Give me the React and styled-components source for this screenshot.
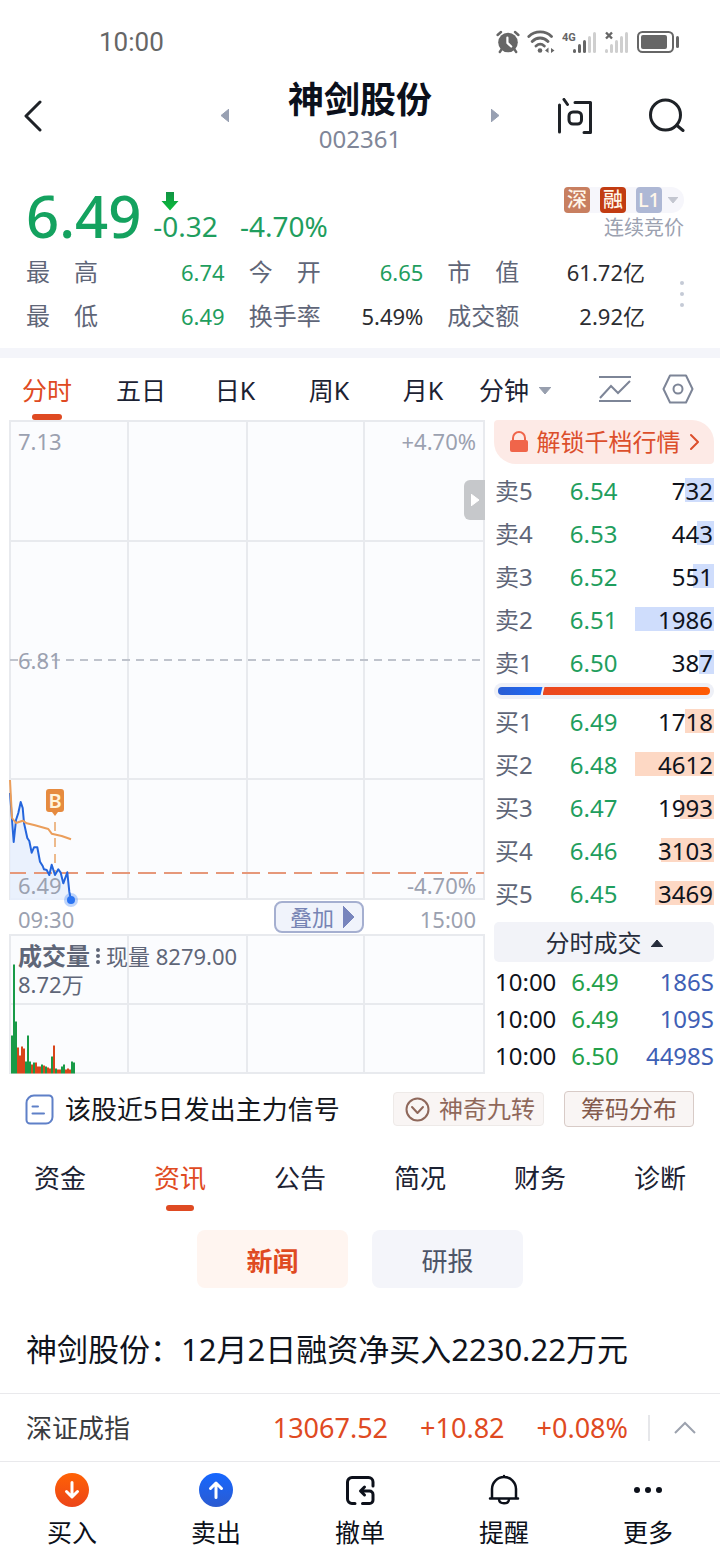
import React, {useState} from 'react';
import styled, {createGlobalStyle} from 'styled-components';

const GREEN = '#1f9e5e';
const RED = '#df4a22';
const INK = '#1c2233';
const GREY = '#5f6678';
const PALE = '#9ba1b0';

const GlobalStyle = createGlobalStyle`
    * {
        box-sizing: border-box;
    }

    body {
        margin: 0;
        background: #fff;
        color: #0f131c;
        font-family: "Noto Sans", "Noto Sans CJK SC", sans-serif;
        font-size: 24px;
        line-height: 32px;
    }

    svg {
        display: block;
        flex-shrink: 0;
    }
`;

const Page = styled.div`
    display: flex;
    flex-direction: column;
    min-height: 100vh;
    overflow-x: hidden;
`;

const PlainButton = styled.button`
    display: flex;
    align-items: center;
    justify-content: center;
    padding: 0;
    border: none;
    background: none;
    color: inherit;
    font: inherit;
    white-space: nowrap;
    cursor: pointer;
`;

/* ---------- status bar and header ---------- */

const StatusBar = styled.div`
    display: flex;
    align-items: center;
    justify-content: space-between;
    height: 74px;
    padding: 10px 41px 0 99px;
    color: #666;
    font-family: Roboto, sans-serif;
    font-size: 26px;
`;

const StatusIcons = styled.div`
    display: flex;
    align-items: center;
    gap: 7px;
`;

const Header = styled.header`
    display: grid;
    grid-template-columns: 1fr 278px 1fr;
    align-items: center;
    height: 83px;
    padding: 0 24px;
    color: #1e2227;
`;

const StockSwitcher = styled.div`
    display: flex;
    align-items: center;
    justify-content: space-between;
    text-align: center;
`;

const StockTitle = styled.div`
    padding-top: 2px;
`;

const StockName = styled.h1`
    margin: 0;
    color: #0b101b;
    font-size: 36px;
    line-height: 44px;
    font-weight: 700;
`;

const StockCode = styled.div`
    color: #7f8698;
    font-size: 24px;
    line-height: 34px;
`;

const HeaderActions = styled.div`
    display: flex;
    justify-content: flex-end;
    gap: 56px;
    padding-right: 11px;
`;

/* ---------- quote ---------- */

const Quote = styled.section`
    padding: 25px 36px 10px 26px;
    border-bottom: 10px solid #f4f5fa;
`;

const QuoteTop = styled.div`
    display: flex;
    height: 68px;
    color: ${GREEN};
`;

const Price = styled.div`
    color: #14a25f;
    font-size: 58px;
    line-height: 68px;
    font-weight: 500;
`;

const Change = styled.div`
    display: flex;
    flex-direction: column;
    margin-left: 12px;
    padding-top: 9px;
    font-size: 28px;
    line-height: 30px;

    svg {
        margin-left: 8px;
    }
`;

const ChangeRow = styled.div`
    display: flex;
    gap: 22px;
`;

const Tags = styled.div`
    margin: 5px 0 0 auto;
    color: ${PALE};
    font-size: 20px;
    line-height: 30px;
    text-align: right;
`;

const TagRow = styled.div`
    display: flex;
    align-items: center;
    gap: 10px;
    border-radius: 4px 13px 13px 4px;
    background: #f6f6fb;
`;

const Tag = styled.span`
    width: 26px;
    height: 26px;
    border-radius: 4px;
    background: ${(props) => props.$color};
    color: #fff6ea;
    font-size: 20px;
    line-height: 26px;
    font-weight: 500;
    text-align: center;
`;

const LevelButton = styled(PlainButton)`
    gap: 6px;
    padding-right: 6px;
`;

const StatsRow = styled.div`
    display: flex;
    align-items: center;
    justify-content: space-between;
`;

const Stats = styled.dl`
    display: grid;
    flex: 1;
    grid-template-columns: 199fr 175fr 198fr;
    column-gap: 24px;
    margin: 0 35px 0 0;
    line-height: 44px;
`;

const Stat = styled.div`
    display: flex;
    justify-content: space-between;

    dt {
        color: ${GREY};
    }

    dd {
        margin: 0;
        color: ${(props) => (props.$down ? GREEN : '#2c2d31')};
        font-size: 22px;
    }
`;

/* ---------- period tabs ---------- */

const PeriodTabs = styled.nav`
    display: grid;
    grid-template-columns: repeat(5, 94fr) 90fr 160fr;
    height: 62px;
    color: ${INK};
    font-size: 25px;
`;

const PeriodTab = styled(PlainButton)`
    position: relative;
    gap: 10px;
    padding-top: 2px;
    color: ${(props) => (props.$active ? RED : INK)};

    &::after {
        content: '';
        position: absolute;
        bottom: 0;
        width: 30px;
        height: 6px;
        border-radius: 3px;
        background: ${(props) => (props.$active ? RED : 'transparent')};
    }
`;

const ChartTools = styled.div`
    display: flex;
    align-items: center;
    justify-content: flex-end;
    gap: 30px;
    padding-right: 26px;
`;

/* ---------- chart column ---------- */

const Market = styled.main`
    display: flex;
    gap: 9px;
    padding: 0 6px 0 9px;
`;

const ChartColumn = styled.div`
    flex: 476;
    min-width: 0;
    color: ${PALE};
    font-size: 22px;
`;

const Plot = styled.div`
    position: relative;
`;

const ChartSvg = styled.svg`
    width: 100%;
    height: auto;
    overflow: visible;
`;

const PlotLabel = styled.span`
    position: absolute;
    line-height: 28px;
    ${(props) => (props.$right ? 'right: 9px;' : 'left: 9px;')}
    ${(props) => props.$at === 'top' && 'top: 7px;'}
    ${(props) => props.$at === 'middle' && 'top: calc(50% - 14px);'}
    ${(props) => props.$at === 'bottom' && 'bottom: 1px;'}
`;

const DrawerHandle = styled(PlainButton)`
    position: absolute;
    top: 60px;
    right: 0;
    width: 21px;
    height: 40px;
    border-radius: 6px 0 0 6px;
    background: #c6c8cb;
`;

const TimeAxis = styled.div`
    display: grid;
    grid-template-columns: 256fr 90px 112fr;
    align-items: center;
    height: 34px;
    padding: 0 9px;
    line-height: 28px;

    span {
        padding-top: 4px;
    }

    span:last-child {
        text-align: right;
    }
`;

const OverlayButton = styled(PlainButton)`
    gap: 9px;
    height: 32px;
    padding-left: 6px;
    border: 2px solid #a5afd0;
    border-radius: 8px;
    background: #f0f3fb;
    color: #7784b4;
`;

const VolumeInfo = styled.div`
    position: absolute;
    top: 8px;
    left: 9px;
    color: ${GREY};
    line-height: 28px;
`;

const VolumeTitle = styled.div`
    display: flex;
    align-items: center;
    gap: 6px;

    strong {
        font-size: 24px;
    }
`;

/* ---------- order book ---------- */

const BookColumn = styled.aside`
    flex: 220;
    min-width: 0;
`;

const UnlockButton = styled(PlainButton)`
    gap: 9px;
    width: 100%;
    height: 44px;
    margin-bottom: 4px;
    border-radius: 4px 22px 4px 22px;
    background: #fdeae6;
    color: #dc4f2c;
`;

const BookTable = styled.table`
    width: 100%;
    border-collapse: collapse;
    table-layout: fixed;

    td, th {
        height: 43px;
        padding: 2px 0 0 1px;
        font-weight: 400;
        text-align: left;
    }

    th {
        width: 34%;
        color: ${GREY};
    }

    td:nth-child(2) {
        color: ${GREEN};
    }
`;

const Quantity = styled.td`
    && {
        width: 80px;
        padding-right: 1px;
        background: linear-gradient(${(props) => props.$color}, ${(props) => props.$color}) right center / ${(props) => props.$bar}px 24px no-repeat;
        text-align: right;
    }
`;

const RatioBar = styled.div`
    display: flex;
    height: 16px;
    padding: 4px;
    border-radius: 8px;
    background: #eef0f7;
`;

const RatioSell = styled.div`
    flex: 21;
    border-radius: 4px 0 0 4px;
    background: linear-gradient(90deg, #2b5dd2, #1b6bfa);
    clip-path: polygon(0 0, 100% 0, calc(100% - 2px) 100%, 0 100%);
`;

const RatioBuy = styled.div`
    flex: 79;
    border-radius: 0 4px 4px 0;
    background: linear-gradient(90deg, #ea4720, #ff5b05);
    clip-path: polygon(2px 0, 100% 0, 100% 100%, 0 100%);
`;

const DealsToggle = styled(PlainButton)`
    gap: 9px;
    width: 100%;
    height: 40px;
    margin: 8px 0 1px;
    padding-top: 2px;
    border-radius: 5px;
    background: #f2f3f8;
    color: #272d3c;
`;

const DealTable = styled.table`
    width: 100%;
    border-collapse: collapse;

    td {
        height: 37px;
        padding: 0 0 0 1px;
    }

    td:nth-child(2) {
        color: #23a04a;
    }

    td:nth-child(3) {
        color: #3f60b5;
        text-align: right;
    }
`;

/* ---------- lower sections ---------- */

const SignalRow = styled.div`
    display: flex;
    align-items: center;
    height: 70px;
    padding: 0 26px 0 25px;
`;

const SignalLink = styled.a`
    display: flex;
    align-items: center;
    gap: 11px;
    color: #14161c;
    font-size: 26px;
    text-decoration: none;
    white-space: nowrap;
`;

const ToolButton = styled(PlainButton)`
    gap: 9px;
    height: ${(props) => (props.$outlined ? 36 : 34)}px;
    margin-left: ${(props) => (props.$outlined ? '20px' : 'auto')};
    padding: 0 ${(props) => (props.$outlined ? 16 : 8)}px 0 ${(props) => (props.$outlined ? 16 : 11)}px;
    border: 1px solid ${(props) => (props.$outlined ? '#d8cbc7' : '#eeeae8')};
    border-radius: 4px;
    background: #f9f5f4;
    color: ${(props) => (props.$outlined ? '#835a4c' : '#8f685b')};
`;

const InfoTabs = styled.nav`
    display: grid;
    grid-template-columns: repeat(6, 1fr);
    height: 68px;
    font-size: 26px;
`;

const InfoTab = styled(PlainButton)`
    position: relative;
    color: ${(props) => (props.$active ? RED : INK)};

    &::after {
        content: '';
        position: absolute;
        bottom: 1px;
        width: 28px;
        height: 6px;
        border-radius: 3px;
        background: ${(props) => (props.$active ? RED : 'transparent')};
    }
`;

const FeedSwitch = styled.div`
    display: flex;
    justify-content: center;
    gap: 24px;
    padding: 18px 0;
`;

const FeedButton = styled(PlainButton)`
    width: 151px;
    height: 58px;
    padding-top: 4px;
    border-radius: 8px;
    background: ${(props) => (props.$active ? '#fff5f0' : '#f4f5fa')};
    color: ${(props) => (props.$active ? RED : '#4d5467')};
    font-size: 26px;
    font-weight: ${(props) => (props.$active ? 700 : 400)};
`;

const NewsItem = styled.a`
    flex: 1;
    padding: 23px 26px 20px;
    color: #0f131c;
    font-size: 31px;
    line-height: 40px;
    text-decoration: none;
`;

const IndexBar = styled.div`
    display: flex;
    align-items: center;
    gap: 20px;
    height: 69px;
    padding: 0 24px 0 26px;
    border: solid #e9e9ec;
    border-width: 1px 0;
    color: ${RED};
    font-size: 27px;
`;

const IndexName = styled.span`
    color: #3a3b3e;
    font-size: 26px;
`;

const IndexFigures = styled.div`
    display: flex;
    gap: 32px;
    margin-left: auto;
`;

const ExpandButton = styled(PlainButton)`
    height: 26px;
    padding-left: 24px;
    border-left: 2px solid #e6e7ea;
`;

const BottomNav = styled.nav`
    display: grid;
    grid-template-columns: repeat(5, 1fr);
    padding: 11px 0 12px;
    color: #0c101a;
    font-size: 25px;
`;

const NavButton = styled(PlainButton)`
    flex-direction: column;
    gap: 9px;
`;

/* ---------- icons ---------- */

const Triangle = ({dir, w, h, color}) => {
    const points = {
        left: `${w},0 ${w},${h} 0,${h / 2}`,
        right: `0,0 ${w},${h / 2} 0,${h}`,
        down: `0,0 ${w},0 ${w / 2},${h}`,
        up: `0,${h} ${w},${h} ${w / 2},0`,
    };
    return (
        <svg width={w} height={h} viewBox={`0 0 ${w} ${h}`}>
            <polygon points={points[dir]} fill={color} stroke={color} strokeLinejoin="round"/>
        </svg>
    );
};

const Stroke = ({w, h, width = 2, children}) => (
    <svg width={w} height={h} viewBox={`0 0 ${w} ${h}`} fill="none" stroke="currentColor"
         strokeWidth={width} strokeLinecap="round" strokeLinejoin="round">
        {children}
    </svg>
);

const AlarmIcon = () => (
    <svg width="24" height="24" viewBox="0 0 24 24" fill="none" stroke="#666" strokeWidth="2.4" strokeLinecap="round">
        <circle cx="12" cy="12.5" r="9.8" fill="#666" stroke="none"/>
        <path d="M1.6 5 5 2M22.4 5 19 2M5.5 19.5 3.8 22M18.5 19.5l1.7 2.5"/>
        <path d="M11.4 7.5v5.4l3.8 3.6" stroke="#fff" strokeWidth="2.2" strokeLinejoin="round"/>
    </svg>
);

const WifiIcon = () => (
    <svg width="28" height="24" viewBox="0 0 28 24" fill="none" stroke="#666" strokeWidth="2.8" strokeLinecap="round">
        <path d="M1.8 6.5C8 .4 18.4.4 24.5 6.5M5.2 11.5c4.4-4.7 11.4-4.7 15.8 0M9 16c2.6-2.3 5.8-2.3 8.3 0"/>
        <circle cx="13" cy="20.5" r="2.3" fill="#666" stroke="none"/>
        <path d="M18 20.5 21.5 17.5v5.5zM27.5 20.5 24 18v5z" fill="#666" stroke="none"/>
    </svg>
);

const BARS = [4, 9, 13, 17, 21];

const SignalBars = ({strength, x}) => BARS.map((h, i) => (
    <rect key={h} x={x + i * 5} y={23 - h} width="3" height={h} rx="1.5"
          fill={i < strength ? '#666' : '#cfcfcf'}/>
));

const MobileSignalIcon = () => (
    <svg width="36" height="24" viewBox="0 0 36 24">
        <SignalBars strength={3} x={11}/>
        <text x="0" y="11" fill="#666" fontSize="11" fontWeight="700">4G</text>
    </svg>
);

const NoSignalIcon = () => (
    <svg width="25" height="24" viewBox="0 0 25 24">
        <SignalBars strength={0} x={0}/>
        <path d="m1 2.500 6 6m0-6-6 6" stroke="#666" strokeWidth="2.4"/>
    </svg>
);

const BatteryIcon = () => (
    <svg width="42" height="24" viewBox="0 0 42 24">
        <rect x="1" y="2" width="35" height="20" rx="4.5" fill="none" stroke="#666" strokeWidth="2"/>
        <rect x="4" y="5" width="26" height="14" rx="2" fill="#666"/>
        <rect x="39" y="6" width="3" height="12" rx="1.5" fill="#666"/>
    </svg>
);

const AskIcon = () => (
    <Stroke w={36} h={36} width={3}>
        <path d="M2.5 7v27M7 1.500l3.500 5M18 4.500h15.500v30H27"/>
        <rect x="12" y="14" width="12.5" height="12" rx="4"/>
    </Stroke>
);

const SearchIcon = () => (
    <Stroke w={36} h={36} width={3}>
        <circle cx="16.5" cy="17" r="15"/>
        <path d="m28 27.500 6 5"/>
    </Stroke>
);

const DownArrow = () => (
    <svg width="18" height="20" viewBox="0 0 18 20">
        <defs>
            <linearGradient id="down" x1="0" y1="0" x2="0" y2="1">
                <stop offset="0" stopColor="#129344"/>
                <stop offset="1" stopColor="#08bd3a"/>
            </linearGradient>
        </defs>
        <path d="M5 1h8v9h4.500L9 19.500.500 10H5z" fill="url(#down)"/>
    </svg>
);

const MoreDots = ({color, r = 2, gap = 11}) => (
    <svg width={r * 2} height={gap * 2 + r * 2} viewBox={`0 0 ${r * 2} ${gap * 2 + r * 2}`} fill={color}>
        {[0, 1, 2].map((i) => <circle key={i} cx={r} cy={r + i * gap} r={r}/>)}
    </svg>
);

const TradeIcon = ({buy}) => (
    <svg width="34" height="34" viewBox="0 0 34 34">
        <defs>
            <linearGradient id={buy ? 'buy' : 'sell'} x1="0" y1="0" x2="0" y2="1">
                <stop offset="0" stopColor={buy ? '#ff6205' : '#1667ff'}/>
                <stop offset="1" stopColor={buy ? '#ec4519' : '#2b5bd0'}/>
            </linearGradient>
        </defs>
        <circle cx="17" cy="17" r="17" fill={`url(#${buy ? 'buy' : 'sell'})`}/>
        <path d={buy ? 'M17 9.500v14M11.500 18.500l5.500 5.500 5.500-5.500' : 'M17 24.500v-14M11.500 15.500l5.500-5.500 5.500 5.500'}
              fill="none" stroke="#fff" strokeWidth="3" strokeLinecap="round" strokeLinejoin="round"/>
    </svg>
);

const CancelIcon = () => (
    <Stroke w={34} h={34} width={3}>
        <path d="M12 30.500H9a4.500 4.500 0 0 1-4.500-4.500V9A4.500 4.500 0 0 1 9 4.500h16.500A4.500 4.500 0 0 1 30 9v4"/>
        <path d="M18.500 18h8a3.500 3.500 0 0 1 3.500 3.500v5.500a3.500 3.500 0 0 1-3.500 3.500h-7M21.500 14l-4 4 4 4"/>
    </Stroke>
);

const BellIcon = () => (
    <Stroke w={34} h={34} width={2.5}>
        <path d="M5 25.500V16a12 12 0 0 1 24 0v9.500M3 25.500h28M12 26.500c.500 5 9.500 5 10 0M17 3v1"/>
    </Stroke>
);

const EllipsisIcon = () => (
    <svg width="34" height="34" viewBox="0 0 34 34" fill="currentColor">
        <circle cx="6" cy="17" r="3"/>
        <circle cx="17" cy="17" r="3"/>
        <circle cx="28" cy="17" r="3"/>
    </svg>
);

/* ---------- charts ---------- */

const PRICE_LINE = '1,373 4.7,422 7,400 9.3,393 11.7,382 13.7,388 15,403 18.3,418 20.3,421 22.7,432.7 25,427.3 28.3,427.3 31,441.7 33.7,446 35,449.3 37.7,450 40.3,455 42.7,444.7 46,455 49.3,449.3 51.7,452.7 54.3,463.3 58.3,452.3 60.3,471.7 62,480';
const AVERAGE_LINE = '1,360 3,398 7,403 13.7,400.7 17.7,403.3 26,405.3 39.3,409 42.7,413.7 52.7,416 62,419.3';

const VOLUMES = [
    [38, 'g'], [109, 'g'], [52, 'g'], [26, 'r'], [18, 'r'], [27, 'r'], [25, 'r'], [12, 'g'],
    [38, 'g'], [12, 'g'], [9, 'r'], [11, 'g'], [11, 'r'], [7, 'r'], [7, 'r'], [9, 'g'],
    [8, 'r'], [7, 'g'], [6, 'r'], [5, 'r'], [17, 'g'], [28, 'r'], [5, 'g'], [4, 'r'],
    [4, 'r'], [7, 'g'], [9, 'g'], [4, 'r'], [5, 'r'], [4, 'r'], [12, 'g'], [11, 'g'],
];

const Grid = ({height, rows}) => (
    <g stroke="#e8eaee" strokeWidth="2">
        <rect x="1" y="1" width="474" height={height - 2} fill="#fbfcfe"/>
        {[119, 238, 355].map((x) => <line key={x} x1={x} x2={x} y1="1" y2={height - 1}/>)}
        {rows.map((y) => <line key={y} x1="1" x2="475" y1={y} y2={y}/>)}
    </g>
);

const PriceChart = () => (
    <ChartSvg viewBox="0 0 476 480">
        <Grid height={480} rows={[121, 359]}/>
        <line x1="1" x2="475" y1="240" y2="240" stroke="#bfc3cc" strokeWidth="2" strokeDasharray="8 6"/>
        <polygon points={`${PRICE_LINE} 1,480`} fill="#e6eefd" fillOpacity=".85"/>
        <line x1="1" x2="475" y1="453" y2="453" stroke="#e6987a" strokeWidth="2" strokeDasharray="18 8" strokeDashoffset="2"/>
        <line x1="46" x2="46" y1="402" y2="453" stroke="#e9a467" strokeWidth="1.5" strokeDasharray="9 7"/>
        <polyline points={PRICE_LINE} fill="none" stroke="#2465dc" strokeWidth="2" strokeLinejoin="round"/>
        <polyline points={AVERAGE_LINE} fill="none" stroke="#eb9e5b" strokeWidth="2" strokeLinejoin="round"/>
        <path d="M40 369h12a3 3 0 0 1 3 3v17a3 3 0 0 1-3 3h-3l-3 4-3-4h-3a3 3 0 0 1-3-3v-17a3 3 0 0 1 3-3z"
              fill="#e68b3f"/>
        <text x="46" y="388" fill="#fff4dc" fontSize="20" fontWeight="600" textAnchor="middle">B</text>
        <circle cx="62" cy="480" r="7" fill="#2b74f2" fillOpacity=".3"/>
        <circle cx="62" cy="480" r="4" fill="#2b74f2"/>
    </ChartSvg>
);

const VolumeChart = () => (
    <ChartSvg viewBox="0 0 476 140">
        <Grid height={140} rows={[70]}/>
        {VOLUMES.map(([h, side], i) => (
            <rect key={i} x={2 + i * 2} y={139.5 - h} width="2" height={h} fill={side === 'g' ? '#189a47' : '#d9451b'}/>
        ))}
    </ChartSvg>
);

/* ---------- data ---------- */

const STATS = [
    ['最　高', '6.74', true],
    ['今　开', '6.65', true],
    ['市　值', '61.72亿', false],
    ['最　低', '6.49', true],
    ['换手率', '5.49%', false],
    ['成交额', '2.92亿', false],
];

const SELLS = [
    ['卖5', '6.54', 732, 29],
    ['卖4', '6.53', 443, 17],
    ['卖3', '6.52', 551, 21],
    ['卖2', '6.51', 1986, 79],
    ['卖1', '6.50', 387, 15],
];

const BUYS = [
    ['买1', '6.49', 1718, 29],
    ['买2', '6.48', 4612, 79],
    ['买3', '6.47', 1993, 34],
    ['买4', '6.46', 3103, 53],
    ['买5', '6.45', 3469, 59],
];

const DEALS = [
    ['10:00', '6.49', '186S'],
    ['10:00', '6.49', '109S'],
    ['10:00', '6.50', '4498S'],
];

const PERIODS = ['分时', '五日', '日K', '周K', '月K', '分钟'];
const INFO = ['资金', '资讯', '公告', '简况', '财务', '诊断'];

const Book = ({rows, color}) => (
    <BookTable>
        <tbody>
            {rows.map(([label, price, quantity, bar]) => (
                <tr key={label}>
                    <th scope="row">{label}</th>
                    <td>{price}</td>
                    <Quantity $bar={bar} $color={color}>{quantity}</Quantity>
                </tr>
            ))}
        </tbody>
    </BookTable>
);

const App = () => {
    const [period, setPeriod] = useState('分时');
    const [info, setInfo] = useState('资讯');
    const [feed, setFeed] = useState('新闻');

    return (
        <Page>
            <GlobalStyle/>
            <StatusBar>
                <span>10:00</span>
                <StatusIcons>
                    <AlarmIcon/>
                    <WifiIcon/>
                    <MobileSignalIcon/>
                    <NoSignalIcon/>
                    <BatteryIcon/>
                </StatusIcons>
            </StatusBar>

            <Header>
                <div>
                    <PlainButton aria-label="返回">
                        <Stroke w={18} h={32} width={3}>
                            <path d="M16 2 2 16l14 14"/>
                        </Stroke>
                    </PlainButton>
                </div>
                <StockSwitcher>
                    <PlainButton aria-label="上一只">
                        <Triangle dir="left" w={8} h={13} color="#98a0b2"/>
                    </PlainButton>
                    <StockTitle>
                        <StockName>神剑股份</StockName>
                        <StockCode>002361</StockCode>
                    </StockTitle>
                    <PlainButton aria-label="下一只">
                        <Triangle dir="right" w={8} h={13} color="#98a0b2"/>
                    </PlainButton>
                </StockSwitcher>
                <HeaderActions>
                    <PlainButton aria-label="问"><AskIcon/></PlainButton>
                    <PlainButton aria-label="搜索"><SearchIcon/></PlainButton>
                </HeaderActions>
            </Header>

            <Quote>
                <QuoteTop>
                    <Price>6.49</Price>
                    <Change>
                        <DownArrow/>
                        <ChangeRow>
                            <span>-0.32</span>
                            <span>-4.70%</span>
                        </ChangeRow>
                    </Change>
                    <Tags>
                        <TagRow>
                            <Tag $color="#c87f60">深</Tag>
                            <Tag $color="#c23c12">融</Tag>
                            <LevelButton>
                                <Tag $color="#aeb8d5">L1</Tag>
                                <Triangle dir="down" w={10} h={6} color="#c3c6d0"/>
                            </LevelButton>
                        </TagRow>
                        连续竞价
                    </Tags>
                </QuoteTop>
                <StatsRow>
                    <Stats>
                        {STATS.map(([label, value, down]) => (
                            <Stat key={label} $down={down}>
                                <dt>{label}</dt>
                                <dd>{value}</dd>
                            </Stat>
                        ))}
                    </Stats>
                    <PlainButton aria-label="更多行情">
                        <MoreDots color="#c5cad6"/>
                    </PlainButton>
                </StatsRow>
            </Quote>

            <PeriodTabs>
                {PERIODS.map((name) => (
                    <PeriodTab key={name} $active={name === period} onClick={() => setPeriod(name)}>
                        {name}
                        {name === '分钟' && <Triangle dir="down" w={12} h={7} color="#989fae"/>}
                    </PeriodTab>
                ))}
                <ChartTools>
                    <PlainButton aria-label="画线">
                        <svg width="34" height="30" viewBox="0 0 34 30" fill="none" stroke="#7d8597" strokeWidth="2">
                            <path d="M1 3h32M1 27h32M2 24l11-12 7 7L32 7"/>
                        </svg>
                    </PlainButton>
                    <PlainButton aria-label="设置">
                        <svg width="32" height="30" viewBox="0 0 32 30" fill="none" stroke="#7d8597" strokeWidth="2" strokeLinejoin="round">
                            <path d="M1.500 15 8 1.500h16L30.500 15 24 28.500H8z"/>
                            <circle cx="16" cy="15" r="4.5"/>
                        </svg>
                    </PlainButton>
                </ChartTools>
            </PeriodTabs>

            <Market>
                <ChartColumn>
                    <Plot>
                        <PriceChart/>
                        <PlotLabel $at="top">7.13</PlotLabel>
                        <PlotLabel $at="top" $right>+4.70%</PlotLabel>
                        <PlotLabel $at="middle">6.81</PlotLabel>
                        <PlotLabel $at="bottom">6.49</PlotLabel>
                        <PlotLabel $at="bottom" $right>-4.70%</PlotLabel>
                        <DrawerHandle aria-label="展开">
                            <Triangle dir="right" w={8} h={12} color="#fff"/>
                        </DrawerHandle>
                    </Plot>
                    <TimeAxis>
                        <span>09:30</span>
                        <OverlayButton>
                            叠加
                            <Triangle dir="right" w={11} h={22} color="#7885bd"/>
                        </OverlayButton>
                        <span>15:00</span>
                    </TimeAxis>
                    <Plot>
                        <VolumeChart/>
                        <VolumeInfo>
                            <VolumeTitle>
                                <strong>成交量</strong>
                                <MoreDots color={GREY} gap={6}/>
                                <span>现量 8279.00</span>
                            </VolumeTitle>
                            8.72万
                        </VolumeInfo>
                    </Plot>
                </ChartColumn>

                <BookColumn>
                    <UnlockButton>
                        <svg width="18" height="22" viewBox="0 0 18 22">
                            <path d="M3 10V7a6 6 0 0 1 12 0v3" fill="none" stroke="#f0654a" strokeWidth="2"/>
                            <rect y="9" width="18" height="12" rx="2" fill="#f0654a"/>
                        </svg>
                        解锁千档行情
                        <Stroke w={9} h={18} width={2}>
                            <path d="m1 2 7 7-7 7"/>
                        </Stroke>
                    </UnlockButton>
                    <Book rows={SELLS} color="#cfddfc"/>
                    <RatioBar>
                        <RatioSell/>
                        <RatioBuy/>
                    </RatioBar>
                    <Book rows={BUYS} color="#fdd8c4"/>
                    <DealsToggle>
                        分时成交
                        <Triangle dir="up" w={12} h={7} color="#272d3c"/>
                    </DealsToggle>
                    <DealTable>
                        <tbody>
                            {DEALS.map(([time, price, quantity]) => (
                                <tr key={quantity}>
                                    <td>{time}</td>
                                    <td>{price}</td>
                                    <td>{quantity}</td>
                                </tr>
                            ))}
                        </tbody>
                    </DealTable>
                </BookColumn>
            </Market>

            <SignalRow>
                <SignalLink href="#signal">
                    <svg width="29" height="31" viewBox="0 0 29 31" fill="none" stroke="#5f80c8" strokeWidth="2" strokeLinecap="round">
                        <path d="M9 1.500h15a3.500 3.500 0 0 1 3.500 3.500v18a6.500 6.500 0 0 1-6.500 6.500H5A3.500 3.500 0 0 1 1.500 26V9A7.500 7.500 0 0 1 9 1.500z"/>
                        <path d="M7.500 12.500H13M7.500 19.500H19"/>
                    </svg>
                    该股近5日发出主力信号
                </SignalLink>
                <ToolButton>
                    <Stroke w={25} h={25} width={2}>
                        <circle cx="12.5" cy="12.5" r="11"/>
                        <path d="m7 10 5.500 6L18 10"/>
                    </Stroke>
                    神奇九转
                </ToolButton>
                <ToolButton $outlined>筹码分布</ToolButton>
            </SignalRow>

            <InfoTabs>
                {INFO.map((name) => (
                    <InfoTab key={name} $active={name === info} onClick={() => setInfo(name)}>{name}</InfoTab>
                ))}
            </InfoTabs>

            <FeedSwitch>
                {['新闻', '研报'].map((name) => (
                    <FeedButton key={name} $active={name === feed} onClick={() => setFeed(name)}>{name}</FeedButton>
                ))}
            </FeedSwitch>

            <NewsItem href="#news">神剑股份：12月2日融资净买入2230.22万元</NewsItem>

            <IndexBar>
                <IndexName>深证成指</IndexName>
                <IndexFigures>
                    <span>13067.52</span>
                    <span>+10.82</span>
                    <span>+0.08%</span>
                </IndexFigures>
                <ExpandButton aria-label="展开指数">
                    <svg width="22" height="14" viewBox="0 0 22 14" fill="none" stroke="#9ca2ae" strokeWidth="2">
                        <path d="M1 12 11 2l10 10"/>
                    </svg>
                </ExpandButton>
            </IndexBar>

            <BottomNav>
                <NavButton><TradeIcon buy/>买入</NavButton>
                <NavButton><TradeIcon/>卖出</NavButton>
                <NavButton><CancelIcon/>撤单</NavButton>
                <NavButton><BellIcon/>提醒</NavButton>
                <NavButton><EllipsisIcon/>更多</NavButton>
            </BottomNav>
        </Page>
    );
};

export default App;
